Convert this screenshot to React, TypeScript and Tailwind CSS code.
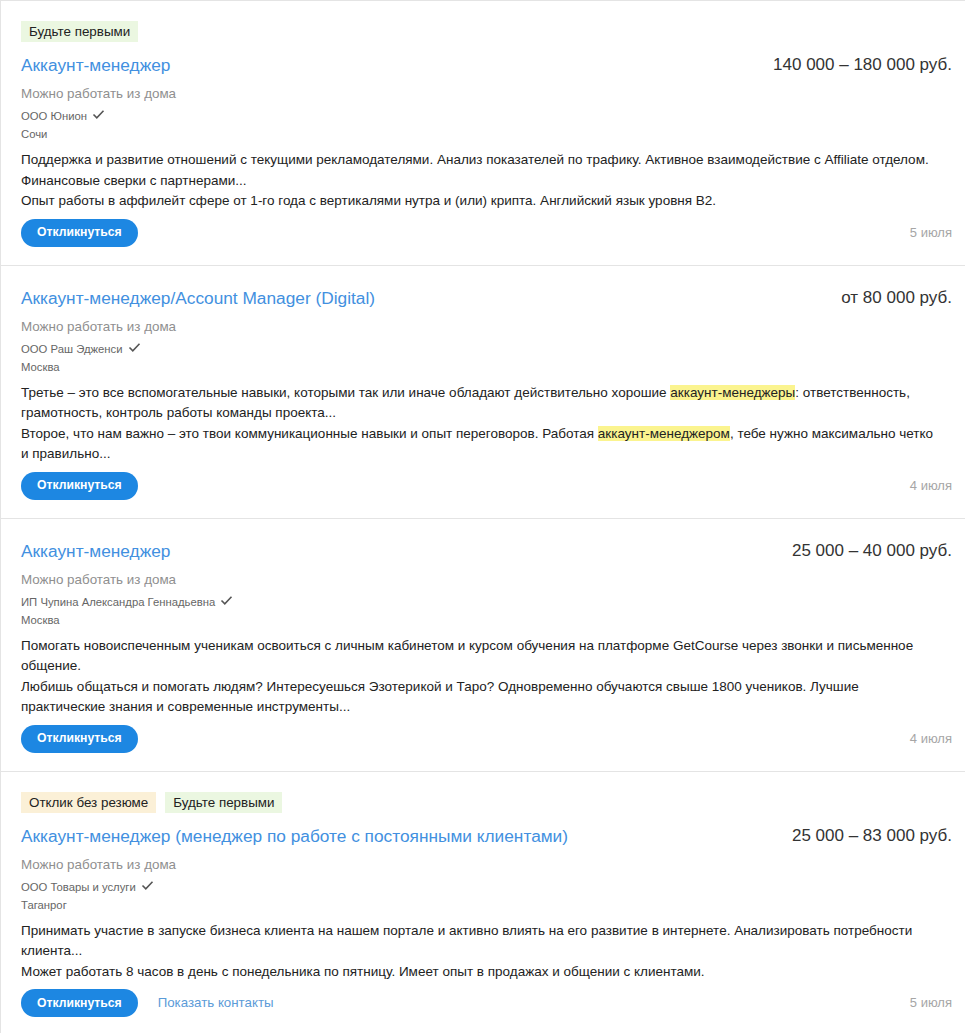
import React from "react";

type Part = string | { h: string };

interface Vac {
  badges?: { text: string; kind: "green" | "yellow" }[];
  title: string;
  salary: string;
  company: string;
  city: string;
  desc: Part[][];
  date: string;
  contacts?: boolean;
}

const vacs: Vac[] = [
  {
    badges: [{ text: "Будьте первыми", kind: "green" }],
    title: "Аккаунт-менеджер",
    salary: "140 000 – 180 000 руб.",
    company: "ООО Юнион",
    city: "Сочи",
    desc: [
      [
        "Поддержка и развитие отношений с текущими рекламодателями. Анализ показателей по трафику. Активное взаимодействие с Affiliate отделом. Финансовые сверки с партнерами...",
      ],
      ["Опыт работы в аффилейт сфере от 1-го года с вертикалями нутра и (или) крипта. Английский язык уровня B2."],
    ],
    date: "5 июля",
  },
  {
    title: "Аккаунт-менеджер/Account Manager (Digital)",
    salary: "от 80 000 руб.",
    company: "ООО Раш Эдженси",
    city: "Москва",
    desc: [
      [
        "Третье – это все вспомогательные навыки, которыми так или иначе обладают действительно хорошие ",
        { h: "аккаунт-менеджеры" },
        ": ответственность, грамотность, контроль работы команды проекта...",
      ],
      [
        "Второе, что нам важно – это твои коммуникационные навыки и опыт переговоров. Работая ",
        { h: "аккаунт-менеджером" },
        ", тебе нужно максимально четко и правильно...",
      ],
    ],
    date: "4 июля",
  },
  {
    title: "Аккаунт-менеджер",
    salary: "25 000 – 40 000 руб.",
    company: "ИП Чупина Александра Геннадьевна",
    city: "Москва",
    desc: [
      [
        "Помогать новоиспеченным ученикам освоиться с личным кабинетом и курсом обучения на платформе GetCourse через звонки и письменное общение.",
      ],
      [
        "Любишь общаться и помогать людям? Интересуешься Эзотерикой и Таро? Одновременно обучаются свыше 1800 учеников. Лучшие практические знания и современные инструменты...",
      ],
    ],
    date: "4 июля",
  },
  {
    badges: [
      { text: "Отклик без резюме", kind: "yellow" },
      { text: "Будьте первыми", kind: "green" },
    ],
    title: "Аккаунт-менеджер (менеджер по работе с постоянными клиентами)",
    salary: "25 000 – 83 000 руб.",
    company: "ООО Товары и услуги",
    city: "Таганрог",
    desc: [
      [
        "Принимать участие в запуске бизнеса клиента на нашем портале и активно влиять на его развитие в интернете. Анализировать потребности клиента...",
      ],
      ["Может работать 8 часов в день с понедельника по пятницу. Имеет опыт в продажах и общении с клиентами."],
    ],
    date: "5 июля",
    contacts: true,
  },
];

function Check() {
  return (
    <svg width="13" height="11" viewBox="0 0 13 11" className="ml-[5px] mt-[-3px]">
      <path d="M1.5 5.5 L4.8 8.8 L11.5 1.8" fill="none" stroke="#555" strokeWidth="1.6" />
    </svg>
  );
}

function Card({ v }: { v: Vac }) {
  return (
    <div className="border-b border-[#e4e4e4] pl-[20px] pr-[13px] pt-[20px] pb-[18px] last:border-b-0">
      {v.badges && (
        <div className="mb-[11px] flex gap-[9px]">
          {v.badges.map((b) => (
            <span
              key={b.text}
              className={
                "h-[21px] px-[8px] text-[13.4px] leading-[21px] text-[#222] " +
                (b.kind === "green" ? "bg-[#ebf7e1]" : "bg-[#fbf0d7]")
              }
            >
              {b.text}
            </span>
          ))}
        </div>
      )}
      <div className="flex items-start justify-between">
        <div className="text-[17.3px] leading-[24px] text-[#4290e0]">{v.title}</div>
        <div className="text-[17px] leading-[24px] text-[#333]">{v.salary}</div>
      </div>
      <div className="mt-[7px] text-[13.4px] leading-[20px] text-[#8f8f8f]">Можно работать из дома</div>
      <div className="mt-[2px] flex items-center text-[11.3px] leading-[20px] text-[#666]">
        {v.company}
        <Check />
      </div>
      <div className="text-[11.3px] leading-[17px] text-[#666]">{v.city}</div>
      <div className="mt-[7px] mr-[15px] text-[13.5px] leading-[20.5px] text-[#222]">
        {v.desc.map((line, i) => (
          <div key={i}>
            {line.map((p, j) =>
              typeof p === "string" ? (
                <span key={j}>{p}</span>
              ) : (
                <span key={j} className="bg-[#fbf48f]">
                  {p.h}
                </span>
              )
            )}
          </div>
        ))}
      </div>
      <div className="mt-[7px] flex items-center justify-between">
        <div className="flex items-center gap-[20px]">
          <button className="h-[28px] rounded-full bg-[#1d87e2] px-[16px] text-[12.2px] font-bold text-white">
            Откликнуться
          </button>
          {v.contacts && <span className="text-[13.3px] text-[#5b9bd8]">Показать контакты</span>}
        </div>
        <div className="text-[13px] text-[#a6a6a6]">{v.date}</div>
      </div>
    </div>
  );
}

export default function App() {
  return (
    <div
      className="min-h-[1033px] w-[965px] bg-white"
      style={{ fontFamily: '"Liberation Sans", Arial, sans-serif' }}
    >
      <div className="border-t border-l border-[#e4e4e4]">
        {vacs.map((v, i) => (
          <Card key={i} v={v} />
        ))}
      </div>
    </div>
  );
}
